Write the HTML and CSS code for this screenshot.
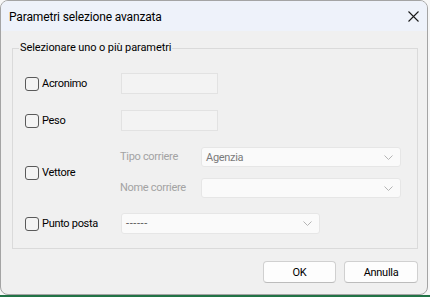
FILE: index.html
```html
<!DOCTYPE html>
<html lang="it">
<head>
  <meta charset="UTF-8" />
  <title>Parametri selezione avanzata</title>
  <link rel="stylesheet" href="styles.css">
</head>
<body>
  <div class="dialog">
    <div class="titlebar">
      <span class="title">Parametri selezione avanzata</span>
      <button class="close-btn" aria-label="Chiudi">
        <svg width="11" height="11" viewBox="0 0 11 11"><path d="M0.5 0.5L10.5 10.5M10.5 0.5L0.5 10.5" stroke="#1a1a1a" stroke-width="1.1" fill="none"/></svg>
      </button>
    </div>

    <div class="dialog-body">
      <fieldset class="groupbox">
        <legend>Selezionare uno o più parametri</legend>

        <div class="param-row">
          <label class="param"><input type="checkbox" class="check">Acronimo</label>
          <input type="text" class="textbox" disabled>
        </div>

        <div class="param-row">
          <label class="param"><input type="checkbox" class="check">Peso</label>
          <input type="text" class="textbox" disabled>
        </div>

        <div class="param-row">
          <label class="param"><input type="checkbox" class="check">Vettore</label>
          <div class="sub-grid">
            <span class="sub-label">Tipo corriere</span>
            <div class="combo wide disabled">
              <span>Agenzia</span>
              <svg width="9" height="5" viewBox="0 0 9 5"><path d="M0.5 0.5L4.5 4.5L8.5 0.5" stroke="#b4b4b4" fill="none"/></svg>
            </div>
            <span class="sub-label">Nome corriere</span>
            <div class="combo wide disabled">
              <span></span>
              <svg width="9" height="5" viewBox="0 0 9 5"><path d="M0.5 0.5L4.5 4.5L8.5 0.5" stroke="#b4b4b4" fill="none"/></svg>
            </div>
          </div>
        </div>

        <div class="param-row last">
          <label class="param"><input type="checkbox" class="check">Punto posta</label>
          <div class="combo">
            <span class="dashes">------</span>
            <svg width="9" height="5" viewBox="0 0 9 5"><path d="M0.5 0.5L4.5 4.5L8.5 0.5" stroke="#b4b4b4" fill="none"/></svg>
          </div>
        </div>
      </fieldset>

      <div class="buttons">
        <button class="btn">OK</button>
        <button class="btn">Annulla</button>
      </div>
    </div>
  </div>
  <div class="sheet-edge"></div>
</body>
</html>
```

FILE: styles.css
```css
body {
  margin: 0;
  font-family: 'Segoe UI', Roboto, 'Noto Sans', sans-serif;
  font-size: 11px;
  letter-spacing: -0.3px;
  color: #000;
  background-color: #f7f7f7;
  width: 430px;
}

.dialog {
  width: 428px;
  height: 295px;
  box-sizing: border-box;
  border: 1px solid #a4a4a4;
  border-radius: 8px;
  background-color: #f0f0f0;
  overflow: hidden;
  display: flex;
  flex-direction: column;
}

.titlebar {
  height: 30px;
  flex: 0 0 auto;
  display: flex;
  align-items: center;
  justify-content: space-between;
  background-color: #eef2fa;
  padding: 0 0 0 8px;
}

.title {
  font-size: 12px;
  letter-spacing: -0.15px;
  line-height: 16px;
  margin-top: 1px;
}

.close-btn {
  width: 28px;
  height: 30px;
  border: none;
  background: transparent;
  padding: 0;
  display: flex;
  align-items: center;
  justify-content: center;
}

.dialog-body {
  flex: 1 1 auto;
  padding: 9px 9px 0 11px;
  display: flex;
  flex-direction: column;
}

.groupbox {
  margin: 0;
  border: 1px solid #dadada;
  padding: 17px 0 14px 12px;
  display: flex;
  flex-direction: column;
  gap: 16px;
}

.groupbox legend {
  margin-left: -6px;
  padding: 0 1px;
  line-height: 16px;
  letter-spacing: -0.1px;
  white-space: nowrap;
}

.param-row {
  display: flex;
  align-items: center;
}

.param-row.last {
  margin-top: -1px;
}

.param {
  width: 96px;
  flex: 0 0 auto;
  display: flex;
  align-items: center;
  gap: 3px;
  line-height: 16px;
  white-space: nowrap;
}

.check {
  appearance: none;
  -webkit-appearance: none;
  margin: 0;
  width: 14px;
  height: 14px;
  box-sizing: border-box;
  border: 1px solid #5a5a5a;
  border-radius: 3px;
  background-color: #f4f4f4;
}

.textbox {
  width: 97px;
  height: 21px;
  box-sizing: border-box;
  border: 1px solid #e2e2e2;
  background-color: #f3f3f3;
  padding: 0 4px;
  margin: 0;
}

.sub-grid {
  display: grid;
  grid-template-columns: 80px 200px;
  row-gap: 11px;
  align-items: center;
}

.sub-label {
  color: #a3a3a3;
  margin-left: -1px;
  line-height: 16px;
  white-space: nowrap;
}

.combo {
  width: 199px;
  height: 21px;
  box-sizing: border-box;
  border: 1px solid #e6e6e6;
  border-radius: 3px;
  background-color: #fafafa;
  display: flex;
  align-items: center;
  justify-content: space-between;
  padding: 0 7px 0 4px;
  color: #444;
}

.combo.wide {
  width: 200px;
  height: 20px;
}

.combo.disabled {
  color: #7a7a7a;
}

.dashes {
  color: #555;
  letter-spacing: 0.6px;
}

.buttons {
  margin-top: 12px;
  display: flex;
  justify-content: flex-end;
  gap: 8px;
}

.btn {
  width: 73px;
  height: 22px;
  box-sizing: border-box;
  border: 1px solid #d0d0d0;
  border-bottom-color: #bcbcbc;
  border-radius: 4px;
  background-color: #fdfdfd;
  font-family: inherit;
  font-size: 11px;
  letter-spacing: -0.3px;
  color: #000;
  padding: 0;
}

.btn + .btn {
  width: 74px;
}

.sheet-edge {
  height: 2px;
  background-color: #217346;
}
```
